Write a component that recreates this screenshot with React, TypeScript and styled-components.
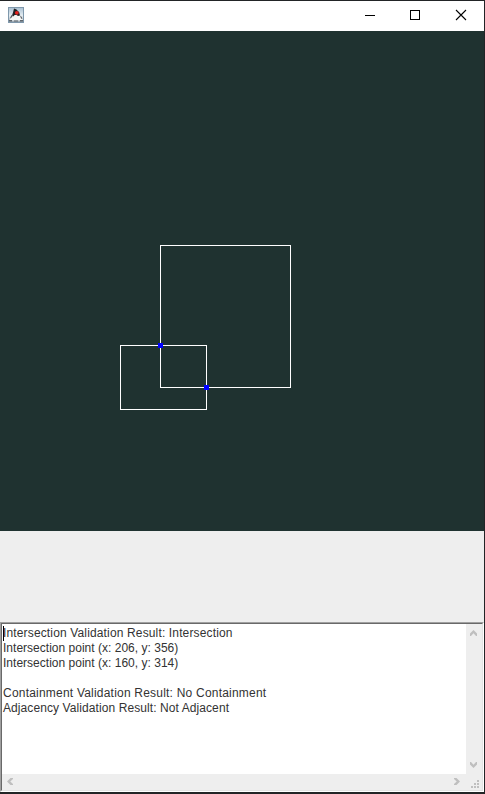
import React from "react";
import styled, { createGlobalStyle } from "styled-components";

const GlobalStyle = createGlobalStyle`
  * { box-sizing: border-box; }
  body { margin: 0; background: #222426; overflow: hidden; }
`;

const Window = styled.div`
  width: 485px;
  height: 794px;
  display: flex;
  flex-direction: column;
  background: #eeeeee;
  border: solid #222426;
  border-width: 1px 1px 2px 0;
  font-family: "Liberation Sans", Arial, sans-serif;
`;

const TitleBar = styled.header`
  height: 30px;
  flex: none;
  display: flex;
  align-items: center;
  justify-content: space-between;
  padding: 0 0 2px 8px;
  background: #ffffff;
`;

const Controls = styled.div`
  display: flex;
`;

const ControlButton = styled.button<{ $inset?: number }>`
  width: 46px;
  height: 28px;
  padding: 0 0 0 ${(p) => p.$inset ?? 0}px;
  border: 0;
  background: none;
  display: flex;
  align-items: center;
  justify-content: center;
`;

const Canvas = styled.main`
  height: 500px;
  flex: none;
  background: #1f3230;
  svg { display: block; }
`;

const Spacer = styled.div`
  height: 91px;
  flex: none;
`;

const Output = styled.section`
  height: 170px;
  flex: none;
  border: 1px solid;
  border-color: #a0a0a0 #ffffff #ffffff #a0a0a0;
`;

const OutputFrame = styled.div`
  width: 482px;
  height: 168px;
  display: grid;
  grid-template-columns: 464px 16px;
  grid-template-rows: 150px 16px;
  border: 1px solid;
  border-color: #696969 #e3e3e3 #e3e3e3 #696969;
  background: #eeeeee;
`;

const TextPane = styled.div`
  background: #ffffff;
  color: #333333;
  font-size: 12px;
  line-height: 15px;
  padding: 2px 0 0 1px;
  white-space: pre;
`;

const Line = styled.div<{ $caret?: boolean; $spacing: number }>`
  height: 15px;
  letter-spacing: ${(p) => p.$spacing}px;
  box-shadow: ${(p) => (p.$caret ? "inset 1px 0 #000" : "none")};
`;

const ScrollTrack = styled.div<{ $vertical?: boolean }>`
  display: flex;
  flex-direction: ${(p) => (p.$vertical ? "column" : "row")};
  justify-content: space-between;
  background: #eeeeee;
`;

const Arrow = styled.svg`
  display: block;
  width: 16px;
  height: 16px;
  fill: #bfbfbf;
`;

const lines = [
  { text: "Intersection Validation Result: Intersection", spacing: 0.145 },
  { text: "Intersection point (x: 206, y: 356)", spacing: 0.015 },
  { text: "Intersection point (x: 160, y: 314)", spacing: 0.015 },
  { text: "", spacing: 0 },
  { text: "Containment Validation Result: No Containment", spacing: 0.21 },
  { text: "Adjacency Validation Result: Not Adjacent", spacing: 0.085 },
];

const shapes = [
  { x: 160, y: 214, w: 130, h: 142 },
  { x: 120, y: 314, w: 86, h: 64 },
];

const points = [
  { x: 206, y: 356 },
  { x: 160, y: 314 },
];

const JavaIcon = () => (
  <svg width="16" height="16" viewBox="0 0 16 16">
    <defs>
      <linearGradient id="tile" x1="0" y1="0" x2="0" y2="1">
        <stop offset="0" stopColor="#a9c0d2" />
        <stop offset="0.55" stopColor="#e6edf2" />
        <stop offset="1" stopColor="#93a0ab" />
      </linearGradient>
    </defs>
    <rect x=".5" y=".5" width="15" height="15" fill="url(#tile)" stroke="#7f98ac" />
    <path d="M1.5 13.5 3 9.5 5.5 8h6l2.5 2 .8 3.5z" fill="#f6f6f4" />
    <path d="M6 1.5 8.5 2.5l2.7 2.7.8 3.3-2 .5-1.5-1-1.8 0-1.6 1.5-1-1.2 1-3z" fill="#202124" />
    <path d="M3.5 8 5 8.5 3.2 11l-1.4.5zM12 8.5l1.6 1.2.8 2.3-1.4-.4z" fill="#53585d" />
    <path d="M1 13h3v1.5H1zM12 13h3v1.5h-3zM6 13.5h4v1H6z" fill="#5e666d" />
    <circle cx="8.8" cy="5.8" r="1.9" fill="#e5221d" />
  </svg>
);

export default function App() {
  return (
    <>
      <GlobalStyle />
      <Window>
        <TitleBar>
          <JavaIcon />
          <Controls>
            <ControlButton $inset={2} aria-label="Minimize">
              <svg width="10" height="10" shapeRendering="crispEdges"><path d="M0 5h10v1H0z" /></svg>
            </ControlButton>
            <ControlButton aria-label="Maximize">
              <svg width="10" height="10" shapeRendering="crispEdges"><path d="M.5.5h9v9h-9z" fill="none" stroke="#000" /></svg>
            </ControlButton>
            <ControlButton aria-label="Close">
              <svg width="10" height="10" overflow="visible"><path d="m0 0 10 10M10 0 0 10" stroke="#000" strokeWidth="1.1" /></svg>
            </ControlButton>
          </Controls>
        </TitleBar>
        <Canvas>
          <svg width="484" height="500" shapeRendering="crispEdges">
            {shapes.map((s) => (
              <rect key={s.x} x={s.x + 0.5} y={s.y + 0.5} width={s.w} height={s.h} fill="none" stroke="#fff" />
            ))}
            {points.map((p) => (
              <rect key={p.x} x={p.x - 2} y={p.y - 2} width="5" height="5" fill="#0000ff" />
            ))}
          </svg>
        </Canvas>
        <Spacer />
        <Output>
          <OutputFrame>
            <TextPane>
              {lines.map((line, i) => (
                <Line key={i} $caret={i === 0} $spacing={line.spacing}>{line.text}</Line>
              ))}
            </TextPane>
            <ScrollTrack $vertical>
              <Arrow><path d="M4 9.5 7.5 6 11 9.5V12H10L7.5 9.3 5 12H4z" /></Arrow>
              <Arrow><path d="M4 6.5 7.5 10 11 6.5V4H10L7.5 6.7 5 4H4z" /></Arrow>
            </ScrollTrack>
            <ScrollTrack>
              <Arrow><path d="M8.5 4 5 7.5 8.5 11H11v-1L8.3 7.5 11 5V4z" /></Arrow>
              <Arrow><path d="M6.5 4 10 7.5 6.5 11H4v-1L6.7 7.5 4 5V4z" /></Arrow>
            </ScrollTrack>
            <Arrow shapeRendering="crispEdges">
              <path d="M11 6h2v2h-2zM8 9h2v2H8zM11 9h2v2h-2zM5 12h2v2H5zM8 12h2v2H8zM11 12h2v2h-2z" />
            </Arrow>
          </OutputFrame>
        </Output>
      </Window>
    </>
  );
}
